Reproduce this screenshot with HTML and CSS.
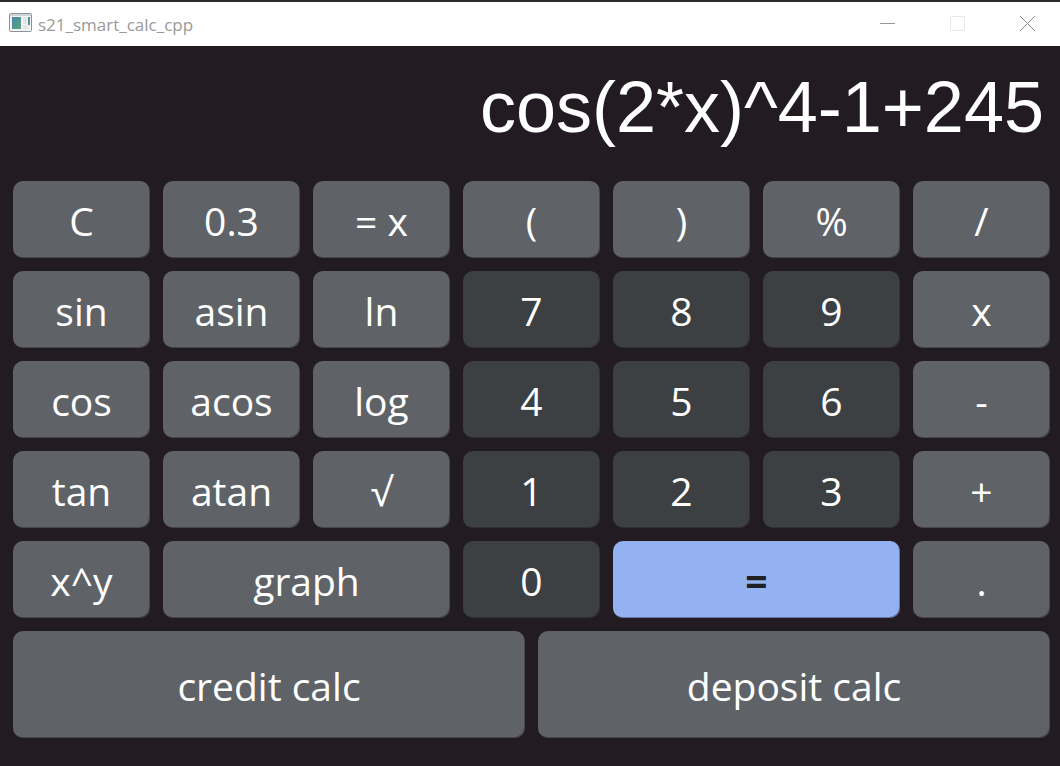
FILE: index.html
```html
<!DOCTYPE html>
<html lang="en">
<head>
<meta charset="utf-8">
<title>s21_smart_calc_cpp</title>
<link rel="stylesheet" href="styles.css">
</head>
<body>
<div class="window">
  <header class="titlebar">
    <svg class="app-icon" width="24" height="20" viewBox="0 0 24 20" aria-hidden="true">
      <defs><linearGradient id="pane" x1="0" y1="0" x2="1" y2="1"><stop offset="0" stop-color="#4f84a8"/><stop offset="1" stop-color="#55a87c"/></linearGradient></defs>
      <rect x="0.5" y="0.5" width="22" height="18" rx="1" fill="#f1f2f3" stroke="#8b9299"/>
      <rect x="1" y="1" width="21" height="2" fill="#cfd4da"/>
      <rect x="3" y="4" width="9" height="12" fill="url(#pane)"/>
      <rect x="14" y="4" width="4" height="7" fill="#e3e4e5"/>
      <rect x="19" y="4" width="2" height="8" fill="url(#pane)"/>
      <rect x="14" y="12" width="5" height="4" fill="#e7e7e8"/>
    </svg>
    <h1 class="title">s21_smart_calc_cpp</h1>
    <div class="controls">
      <button class="control" type="button" aria-label="Minimize"><svg width="16" height="16" viewBox="0 0 16 16"><path d="M0 7.5H15" stroke="#999" fill="none"/></svg></button>
      <button class="control" type="button" aria-label="Maximize" disabled><svg width="16" height="16" viewBox="0 0 16 16"><path d="M.5 .5H14.5V14.5H.5Z" stroke="#e8e8e8" fill="none"/></svg></button>
      <button class="control" type="button" aria-label="Close"><svg width="16" height="16" viewBox="0 0 16 16"><path d="M0 0L15 15M15 0L0 15" stroke="#888" fill="none"/></svg></button>
    </div>
  </header>
  <main class="calculator">
    <input class="display" type="text" aria-label="Expression" value="cos(2*x)^4-1+245" readonly>
    <div class="keys">
      <button class="key" type="button">C</button>
      <button class="key" type="button">0.3</button>
      <button class="key" type="button">= x</button>
      <button class="key" type="button">(</button>
      <button class="key" type="button">)</button>
      <button class="key" type="button">%</button>
      <button class="key" type="button">/</button>
      <button class="key" type="button">sin</button>
      <button class="key" type="button">asin</button>
      <button class="key" type="button">ln</button>
      <button class="key digit" type="button">7</button>
      <button class="key digit" type="button">8</button>
      <button class="key digit" type="button">9</button>
      <button class="key" type="button">x</button>
      <button class="key" type="button">cos</button>
      <button class="key" type="button">acos</button>
      <button class="key" type="button">log</button>
      <button class="key digit" type="button">4</button>
      <button class="key digit" type="button">5</button>
      <button class="key digit" type="button">6</button>
      <button class="key" type="button">-</button>
      <button class="key" type="button">tan</button>
      <button class="key" type="button">atan</button>
      <button class="key" type="button">√</button>
      <button class="key digit" type="button">1</button>
      <button class="key digit" type="button">2</button>
      <button class="key digit" type="button">3</button>
      <button class="key" type="button">+</button>
      <button class="key" type="button">x^y</button>
      <button class="key wide" type="button">graph</button>
      <button class="key digit" type="button">0</button>
      <button class="key wide equals" type="button">=</button>
      <button class="key" type="button">.</button>
    </div>
    <div class="modes">
      <button class="key" type="button">credit calc</button>
      <button class="key" type="button">deposit calc</button>
    </div>
  </main>
</div>
</body>
</html>
```
FILE: styles.css
```css
* { box-sizing: border-box; }
body { margin: 0; background: #221c22; font-family: "Open Sans", sans-serif; }
.window { min-height: 100vh; display: flex; flex-direction: column; border-top: 2px solid #2d2b2d; }
.titlebar { display: flex; align-items: center; height: 44px; padding-left: 9px; background: #fff; }
.app-icon { flex: none; margin-right: 5px; margin-bottom: 2px; }
.title { flex: 1; margin: 0; padding-top: 2px; font-size: 17px; font-weight: 400; line-height: 24px; color: #999; }
.controls { display: flex; height: 100%; }
.control { display: flex; align-items: center; justify-content: center; width: 70px; padding: 0 0 0 6px; border: 0; background: none; }
.calculator { flex: 1; display: flex; flex-direction: column; gap: 13px; padding: 0 10px 28px 13px; }
.display { width: 100%; height: 122px; padding: 0 6px; border: 0; outline: 0; background: none; color: #fff; font: 72px "Liberation Sans", sans-serif; text-align: right; }
.keys { display: grid; grid-template-columns: repeat(7, 1fr); grid-auto-rows: 77px; gap: 13px; }
.modes { display: grid; grid-template-columns: 1fr 1fr; grid-auto-rows: 107px; gap: 13px; }
.key { min-width: 0; padding: 2px 0 0; border: 0; border-radius: 10px; background: #5f6368; box-shadow: inset -1px -1px 0 rgba(34, 28, 34, 0.4); color: #fff; font: 39px/54px "Open Sans", sans-serif; }
.wide { grid-column: span 2; }
.digit { background: #3c4043; }
.equals { background: #94b1f2; color: #202124; font-weight: 700; }
```
